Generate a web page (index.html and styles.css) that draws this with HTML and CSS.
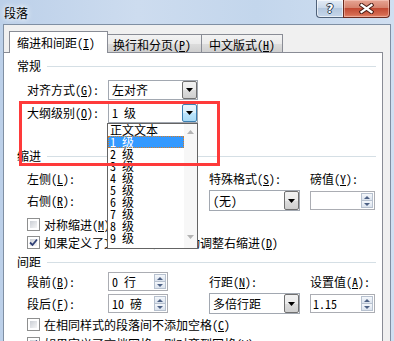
FILE: index.html
```html
<!DOCTYPE html>
<html lang="zh-CN">
<head>
    <meta charset="UTF-8">
    <meta name="viewport" content="width=device-width, initial-scale=1.0">
    <title>段落</title>
    <link rel="stylesheet" href="styles.css">
</head>
<body>

    <div class="window">
        <div class="titlebar">
            <span class="title">段落</span>
            <div class="caption-buttons">
                <div class="cap-btn help"><span class="help-mark">?</span></div>
                <div class="cap-btn close">
                    <svg width="15" height="11" viewBox="0 0 15 11">
                        <path d="M2.5 2 L12.5 9 M12.5 2 L2.5 9" stroke="#4a1d15" stroke-width="4.2" stroke-linecap="square"/>
                        <path d="M2.5 2 L12.5 9 M12.5 2 L2.5 9" stroke="#ffffff" stroke-width="2.2" stroke-linecap="square"/>
                    </svg>
                </div>
            </div>
        </div>

        <div class="client">
            <div class="tabs">
                <div class="tab active">缩进和间距(<u>I</u>)</div>
                <div class="tab tab-second">换行和分页(<u>P</u>)</div>
                <div class="tab tab-third">中文版式(<u>H</u>)</div>
            </div>

            <div class="panel">
                <div class="group-title general-title">常规</div>

                <div class="form-row align-row">
                    <span class="label">对齐方式(<u>G</u>):</span>
                    <div class="combo">
                        <span class="combo-text">左对齐</span>
                        <span class="combo-btn">
                            <svg width="7" height="4" viewBox="0 0 7 4"><path d="M0 0 H7 L3.5 4 Z" fill="#000"/></svg>
                        </span>
                    </div>
                </div>

                <div class="form-row outline-row">
                    <span class="label">大纲级别(<u>O</u>):</span>
                    <div class="combo-wrap">
                        <div class="combo">
                            <span class="combo-text">1 级</span>
                            <span class="combo-btn hot">
                                <svg width="7" height="4" viewBox="0 0 7 4"><path d="M0 0 H7 L3.5 4 Z" fill="#000"/></svg>
                            </span>
                        </div>
                        <div class="dropdown-list">
                            <div class="list-items">
                                <div class="list-item">正文文本</div>
                                <div class="list-item selected">1 级</div>
                                <div class="list-item">2 级</div>
                                <div class="list-item">3 级</div>
                                <div class="list-item">4 级</div>
                                <div class="list-item">5 级</div>
                                <div class="list-item">6 级</div>
                                <div class="list-item">7 级</div>
                                <div class="list-item">8 级</div>
                                <div class="list-item">9 级</div>
                            </div>
                            <div class="list-scroll">
                                <svg width="7" height="4" viewBox="0 0 7 4"><path d="M0 4 H7 L3.5 0 Z" fill="#b4b4b4"/></svg>
                                <svg width="7" height="4" viewBox="0 0 7 4"><path d="M0 0 H7 L3.5 4 Z" fill="#b4b4b4"/></svg>
                            </div>
                        </div>
                    </div>
                </div>

                <div class="group-title indent-title">缩进</div>

                <div class="field-grid indent-grid">
                    <span class="label col-1">左侧(<u>L</u>):</span>
                    <div class="spin col-2">
                        <span class="spin-text"></span>
                        <span class="spin-btns"><span class="up"></span><span class="down"></span></span>
                    </div>
                    <span class="label col-4">特殊格式(<u>S</u>):</span>
                    <span class="label col-6">磅值(<u>Y</u>):</span>

                    <span class="label col-1">右侧(<u>R</u>):</span>
                    <div class="spin col-2">
                        <span class="spin-text"></span>
                        <span class="spin-btns"><span class="up"></span><span class="down"></span></span>
                    </div>
                    <div class="combo wide col-4">
                        <span class="combo-text">(无)</span>
                        <span class="combo-btn">
                            <svg width="7" height="4" viewBox="0 0 7 4"><path d="M0 0 H7 L3.5 4 Z" fill="#000"/></svg>
                        </span>
                    </div>
                    <div class="spin wide col-6">
                        <span class="spin-text"></span>
                        <span class="spin-btns"><span class="up"></span><span class="down"></span></span>
                    </div>
                </div>

                <div class="check-row mirror-row">
                    <span class="checkbox"></span>
                    <span>对称缩进(<u>M</u>)</span>
                </div>
                <div class="check-row grid-indent-row">
                    <span class="checkbox checked">
                        <svg width="13" height="13" viewBox="0 0 13 13"><path d="M3 6.5 L5.5 9 L10 3.5" fill="none" stroke="#2e3f76" stroke-width="1.8"/></svg>
                    </span>
                    <span>如果定义了文档网格，则自动调整右缩进(<u>D</u>)</span>
                </div>

                <div class="group-title spacing-title">间距</div>

                <div class="field-grid spacing-grid">
                    <span class="label col-1">段前(<u>B</u>):</span>
                    <div class="spin col-2">
                        <span class="spin-text">0 行</span>
                        <span class="spin-btns"><span class="up"></span><span class="down"></span></span>
                    </div>
                    <span class="label col-4">行距(<u>N</u>):</span>
                    <span class="label col-6">设置值(<u>A</u>):</span>

                    <span class="label col-1">段后(<u>F</u>):</span>
                    <div class="spin col-2">
                        <span class="spin-text">10 磅</span>
                        <span class="spin-btns"><span class="up"></span><span class="down"></span></span>
                    </div>
                    <div class="combo wide col-4">
                        <span class="combo-text">多倍行距</span>
                        <span class="combo-btn">
                            <svg width="7" height="4" viewBox="0 0 7 4"><path d="M0 0 H7 L3.5 4 Z" fill="#000"/></svg>
                        </span>
                    </div>
                    <div class="spin wide col-6">
                        <span class="spin-text">1.15</span>
                        <span class="spin-btns"><span class="up"></span><span class="down"></span></span>
                    </div>
                </div>

                <div class="check-row same-style-row">
                    <span class="checkbox"></span>
                    <span>在相同样式的段落间不添加空格(<u>C</u>)</span>
                </div>
                <div class="check-row snap-row">
                    <span class="checkbox checked">
                        <svg width="13" height="13" viewBox="0 0 13 13"><path d="M3 6.5 L5.5 9 L10 3.5" fill="none" stroke="#2e3f76" stroke-width="1.8"/></svg>
                    </span>
                    <span>如果定义了文档网格，则对齐到网格(<u>W</u>)</span>
                </div>
            </div>
        </div>

        <div class="annotation"></div>
    </div>

</body>
</html>
```

FILE: styles.css
```css
body {
    margin: 0;
    font-family: "Noto Sans Mono CJK SC", "Noto Sans CJK SC", sans-serif;
    font-size: 12px;
    line-height: 14px;
    color: #000;
    background: #c6d8ee;
}

u {
    text-underline-offset: 1px;
}

.window {
    position: relative;
    width: 394px;
    height: 341px;
    overflow: hidden;
    display: flex;
    flex-direction: column;
    background: linear-gradient(to right, #bcd0e9, #cddcef 35%, #c3d6ec 65%, #d0dff1);
}

/* title bar */

.titlebar {
    height: 24px;
    flex-shrink: 0;
    display: flex;
    align-items: flex-start;
}

.title {
    margin: 6px 0 0 4px;
    text-shadow: 0 0 4px #fff, 0 0 7px #fff;
}

.caption-buttons {
    margin-left: auto;
    margin-right: 4px;
    display: flex;
}

.cap-btn {
    box-sizing: border-box;
    height: 18px;
    border: 1px solid #4f6179;
    border-top: none;
    display: flex;
    align-items: center;
    justify-content: center;
}

.cap-btn.help {
    width: 27px;
    border-right: none;
    border-radius: 0 0 0 4px;
    background: linear-gradient(#e3ebf6, #cbd9ea 45%, #b4c7de 50%, #c5d6ea);
    box-shadow: inset 0 0 0 1px rgba(255, 255, 255, 0.6);
}

.help-mark {
    font-family: "DejaVu Sans", sans-serif;
    font-weight: bold;
    font-size: 12px;
    line-height: 12px;
    color: #fff;
    text-shadow: 1px 0 0 #2b3a4f, -1px 0 0 #2b3a4f, 0 1px 0 #2b3a4f, 0 -1px 0 #2b3a4f;
}

.cap-btn.close {
    width: 47px;
    border-color: #6b2b20;
    border-radius: 0 0 4px 0;
    background: linear-gradient(#e6a594, #d6826d 45%, #c24a33 50%, #d4694f 85%, #e5886d);
    box-shadow: inset 0 0 0 1px rgba(255, 220, 210, 0.45);
}

/* client area */

.client {
    flex: 1;
    margin: 0 3px;
    border: 1px solid #7f8fa3;
    border-bottom: none;
    background: #f0f0f0;
    display: flex;
    flex-direction: column;
}

.tabs {
    height: 27px;
    flex-shrink: 0;
    display: flex;
    align-items: flex-end;
    padding-left: 5px;
    position: relative;
    z-index: 1;
}

.tab {
    box-sizing: border-box;
    height: 18px;
    border: 1px solid #898c95;
    border-bottom: none;
    background: linear-gradient(#f3f3f3, #ebebeb 50%, #dddddd 51%, #cfcfcf);
    padding-top: 3px;
    white-space: nowrap;
}

.tab.active {
    width: 99px;
    height: 22px;
    margin-bottom: -1px;
    padding: 4px 0 0 7px;
    background: #fff;
}

.tab-second {
    width: 94px;
    border-left: none;
    padding-left: 5px;
}

.tab-third {
    width: 81px;
    border-left: none;
    padding-left: 7px;
}

.panel {
    flex: 1;
    margin-right: 7px;
    background: #fff;
    border-top: 1px solid #898c95;
    border-right: 1px solid #898c95;
    padding-left: 13px;
}

.group-title {
    height: 14px;
    margin-right: 6px;
    display: flex;
    align-items: center;
}

.group-title::after {
    content: "";
    flex: 1;
    height: 1px;
    margin: 1px 0 0 6px;
    background: #d5dfe5;
}

.general-title {
    margin-top: 6px;
}

.indent-title {
    margin-top: 26px;
}

.spacing-title {
    margin-top: 6px;
}

.form-row {
    display: flex;
    align-items: center;
    height: 20px;
    padding-left: 10px;
}

.form-row .label {
    width: 81px;
}

.align-row {
    margin-top: 7px;
}

.outline-row {
    margin-top: 3px;
    position: relative;
    z-index: 2;
}

/* combo boxes */

.combo {
    box-sizing: border-box;
    width: 90px;
    height: 20px;
    border: 1px solid #a2a8b1;
    background: #fff;
    display: flex;
    align-items: center;
    padding-left: 3px;
}

.combo.wide {
    width: 91px;
    height: 21px;
}

.combo-text {
    flex: 1;
    white-space: nowrap;
}

.combo-btn {
    box-sizing: border-box;
    width: 15px;
    align-self: stretch;
    border: 1px solid #707070;
    border-radius: 2px;
    background: linear-gradient(#f2f2f2, #ebebeb 50%, #dddddd 51%, #cfcfcf);
    display: flex;
    align-items: center;
    justify-content: center;
}

.combo-btn.hot {
    border-color: #3c7fb1;
    background: linear-gradient(#eaf6fd, #d9f0fc 50%, #bee6fd 51%, #a7d9f5);
}

.combo-wrap {
    position: relative;
}

.dropdown-list {
    position: absolute;
    left: -1px;
    top: 100%;
    box-sizing: border-box;
    width: 91px;
    height: 126px;
    border: 1px solid #646464;
    background: #fff;
    display: flex;
}

.list-items {
    flex: 1;
}

.list-item {
    height: 12px;
    line-height: 12px;
    padding-left: 2px;
    white-space: nowrap;
}

.list-item.selected {
    box-sizing: border-box;
    background: #3399ff;
    color: #fff;
    outline: 1px dotted #cf7d2e;
    outline-offset: -1px;
}

.list-scroll {
    width: 13px;
    background: #f7f7f7;
    display: flex;
    flex-direction: column;
    align-items: center;
    justify-content: space-between;
    padding: 6px 0 9px;
}

/* grids of fields */

.field-grid {
    display: grid;
    grid-template-columns: 81px 60px 41px 91px 10px 65px;
    grid-template-rows: 21px 21px;
    row-gap: 1px;
    align-items: center;
    padding-left: 10px;
}

.col-1 { grid-column: 1; }
.col-2 { grid-column: 2; }
.col-4 { grid-column: 4; }
.col-6 { grid-column: 6; }

.field-grid .label {
    white-space: nowrap;
}

.indent-grid {
    margin-top: 5px;
}

.spacing-grid {
    margin-top: 2px;
}

/* spin boxes */

.spin {
    box-sizing: border-box;
    width: 60px;
    height: 19px;
    border: 1px solid #abadb3;
    background: #fff;
    display: flex;
    align-items: center;
    padding-left: 3px;
}

.spin.wide {
    width: 65px;
    padding-left: 2px;
}

.spin-text {
    flex: 1;
    white-space: nowrap;
}

.spin-btns {
    width: 12px;
    align-self: stretch;
    margin: 1px;
    display: flex;
    flex-direction: column;
}

.spin-btns span {
    flex: 1;
    box-sizing: border-box;
    border: 1px solid #b7c1cf;
    background: linear-gradient(#f4f7fb, #dbe3ee);
    display: flex;
    align-items: center;
    justify-content: center;
}

.spin-btns .down {
    border-top: none;
}

.spin-btns .up::before,
.spin-btns .down::before {
    content: "";
    border-left: 3px solid transparent;
    border-right: 3px solid transparent;
}

.spin-btns .up::before {
    border-bottom: 3px solid #4d6185;
}

.spin-btns .down::before {
    border-top: 3px solid #4d6185;
}

/* check boxes */

.check-row {
    height: 13px;
    padding-left: 10px;
    display: flex;
    align-items: center;
    white-space: nowrap;
}

.checkbox {
    position: relative;
    box-sizing: border-box;
    flex-shrink: 0;
    width: 13px;
    height: 13px;
    margin-right: 4px;
    padding: 2px;
    border: 1px solid #8e8f8f;
    background: linear-gradient(135deg, #cbcfd5, #f6f6f6) content-box, #fff;
}

.checkbox svg {
    position: absolute;
    left: -1px;
    top: -1px;
}

.mirror-row {
    margin-top: 7px;
}

.grid-indent-row {
    margin-top: 5px;
}

.same-style-row {
    margin-top: 4px;
}

.snap-row {
    margin-top: 6px;
}

/* red note drawn over the screenshot */

.annotation {
    position: absolute;
    left: 19px;
    top: 101px;
    width: 201px;
    height: 65px;
    box-sizing: border-box;
    border: 3px solid #fe3a3a;
    z-index: 10;
    pointer-events: none;
}
```
